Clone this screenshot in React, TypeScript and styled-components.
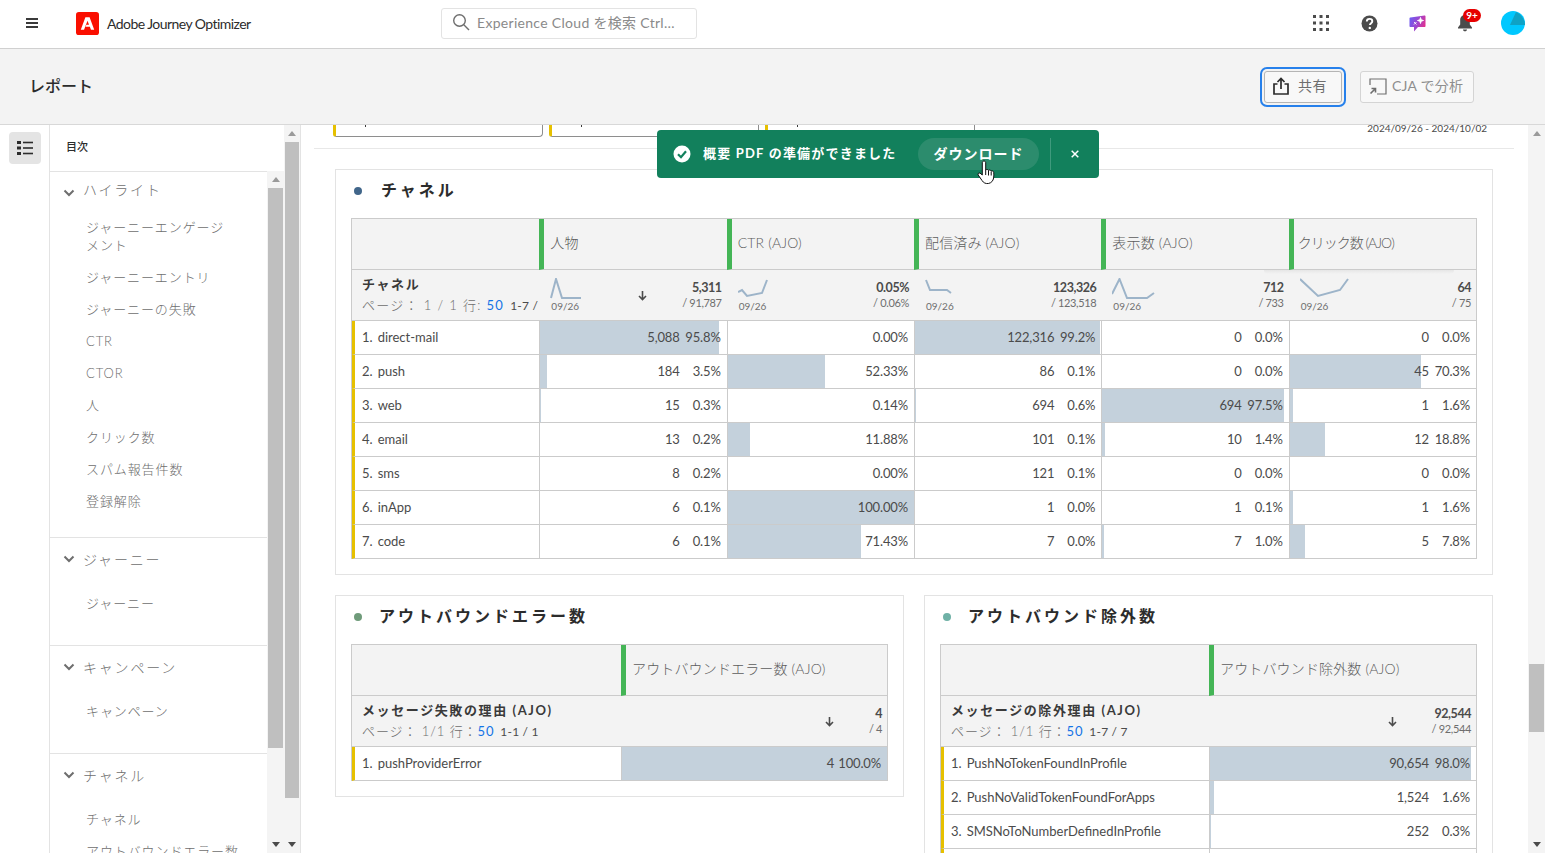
import React from 'react';
import styled, { createGlobalStyle } from 'styled-components';

const FONT = `Lato, "Noto Sans CJK JP", sans-serif`;

const GlobalStyle = createGlobalStyle`
  html, body {
    margin: 0;
    padding: 0;
    height: 100%;
    overflow: hidden;
    background: #fff;
  }
  * { box-sizing: border-box; }
`;

interface Row {
  label: string;
  cells: { value?: string; pct: string; bar: number }[];
}

interface Metric {
  spark?: string;
  sparkWidth?: number;
  total: string;
  sub: string;
  sorted?: boolean;
  shadow?: boolean;
}

const channelRows: Row[] = [
  { label: 'direct-mail', cells: [
    { value: '5,088', pct: '95.8%', bar: 95.8 }, { pct: '0.00%', bar: 0 }, { value: '122,316', pct: '99.2%', bar: 99.2 },
    { value: '0', pct: '0.0%', bar: 0 }, { value: '0', pct: '0.0%', bar: 0 } ] },
  { label: 'push', cells: [
    { value: '184', pct: '3.5%', bar: 3.5 }, { pct: '52.33%', bar: 52.33 }, { value: '86', pct: '0.1%', bar: 0.1 },
    { value: '0', pct: '0.0%', bar: 0 }, { value: '45', pct: '70.3%', bar: 70.3 } ] },
  { label: 'web', cells: [
    { value: '15', pct: '0.3%', bar: 0.3 }, { pct: '0.14%', bar: 0.14 }, { value: '694', pct: '0.6%', bar: 0.6 },
    { value: '694', pct: '97.5%', bar: 97.5 }, { value: '1', pct: '1.6%', bar: 1.6 } ] },
  { label: 'email', cells: [
    { value: '13', pct: '0.2%', bar: 0.2 }, { pct: '11.88%', bar: 11.88 }, { value: '101', pct: '0.1%', bar: 0.1 },
    { value: '10', pct: '1.4%', bar: 1.4 }, { value: '12', pct: '18.8%', bar: 18.8 } ] },
  { label: 'sms', cells: [
    { value: '8', pct: '0.2%', bar: 0.2 }, { pct: '0.00%', bar: 0 }, { value: '121', pct: '0.1%', bar: 0.1 },
    { value: '0', pct: '0.0%', bar: 0 }, { value: '0', pct: '0.0%', bar: 0 } ] },
  { label: 'inApp', cells: [
    { value: '6', pct: '0.1%', bar: 0.1 }, { pct: '100.00%', bar: 100 }, { value: '1', pct: '0.0%', bar: 0 },
    { value: '1', pct: '0.1%', bar: 0.1 }, { value: '1', pct: '1.6%', bar: 1.6 } ] },
  { label: 'code', cells: [
    { value: '6', pct: '0.1%', bar: 0.1 }, { pct: '71.43%', bar: 71.43 }, { value: '7', pct: '0.0%', bar: 0 },
    { value: '7', pct: '1.0%', bar: 1 }, { value: '5', pct: '7.8%', bar: 7.8 } ] },
];

const channelMetrics: Metric[] = [
  { spark: '1,20 6,1 12,20 31,20', sparkWidth: 32, total: '5,311', sub: '/ 91,787', sorted: true },
  { spark: '0,14 4,12 9,18 24,15 29,2', sparkWidth: 32, total: '0.05%', sub: '/ 0.06%' },
  { spark: '1,2 5,12 22,12 26,15', sparkWidth: 32, total: '123,326', sub: '/ 123,518' },
  { spark: '0,16 7.5,1 15,20 35,20 42,15', sparkWidth: 44, total: '712', sub: '/ 733' },
  { spark: '0,1 18,18 40,12 48,1', sparkWidth: 50, total: '64', sub: '/ 75', shadow: true },
];

const channelHeads = ['人物', 'CTR (AJO)', '配信済み (AJO)', '表示数 (AJO)', 'クリック数 (AJO)'];

const tocGroups = [
  { title: 'ハイライト', items: ['ジャーニーエンゲージメント', 'ジャーニーエントリ', 'ジャーニーの失敗', 'CTR', 'CTOR', '人', 'クリック数', 'スパム報告件数', '登録解除'] },
  { title: 'ジャーニー', items: ['ジャーニー'] },
  { title: 'キャンペーン', items: ['キャンペーン'] },
  { title: 'チャネル', items: ['チャネル', 'アウトバウンドエラー数'] },
];

const Page = styled.div`
  height: 100vh;
  display: flex;
  flex-direction: column;
  font-family: ${FONT};
  color: #4b4b4b;
  overflow: hidden;
`;

const TopBar = styled.header`
  flex: 0 0 49px;
  display: flex;
  align-items: center;
  padding: 0 8px 2px 26px;
  background: #fff;
  border-bottom: 1px solid #d0d0d0;
`;

const Brand = styled.div`
  width: 415px;
  display: flex;
  align-items: center;
`;

const Burger = styled.div`
  width: 12px;
  height: 10px;
  margin-right: 38px;
  border-top: 2px solid #3a3a3a;
  border-bottom: 2px solid #3a3a3a;
  display: flex;
  align-items: center;
  &::before {
    content: '';
    display: block;
    width: 100%;
    height: 2px;
    background: #3a3a3a;
  }
`;

const LogoMark = styled.svg`
  width: 23px;
  height: 23px;
  margin-right: 8px;
`;

const BrandName = styled.span`
  font-size: 14px;
  color: #2c2c2c;
  white-space: nowrap;
  letter-spacing: -0.55px;
`;

const SearchBox = styled.div`
  width: 256px;
  height: 31px;
  display: flex;
  align-items: center;
  gap: 7px;
  padding: 0 0 2px 10px;
  border: 1px solid #e3e3e3;
  border-radius: 3px;
  color: #8a8a8a;
  font-size: 14px;
  letter-spacing: 0.3px;
  white-space: nowrap;
`;

const TopIcons = styled.div`
  margin-left: auto;
  display: flex;
  align-items: center;
`;

const TopIcon = styled.div`
  position: relative;
  width: 48px;
  height: 32px;
  display: flex;
  align-items: center;
  justify-content: center;
`;

const Badge = styled.span`
  position: absolute;
  left: 22px;
  top: 2px;
  width: 18px;
  height: 13px;
  border-radius: 7px;
  background: #e60000;
  color: #fff;
  font-size: 10px;
  font-weight: 700;
  line-height: 13px;
  text-align: center;
`;

const Avatar = styled.svg`
  width: 24px;
  height: 24px;
`;

const SubHeader = styled.div`
  flex: 0 0 76px;
  display: flex;
  align-items: center;
  padding: 0 71px 0 29px;
  background: #f3f3f3;
  border-bottom: 1px solid #d8d8d8;
`;

const PageTitle = styled.h1`
  margin: 0 0 4px;
  font-size: 16px;
  font-weight: 500;
  color: #2c2c2c;
`;

const Actions = styled.div`
  margin-left: auto;
  display: flex;
  align-items: center;
  gap: 18px;
`;

const ActionButton = styled.button<{ $focus?: boolean }>`
  height: 32px;
  display: flex;
  align-items: center;
  gap: ${(p) => (p.$focus ? '9px' : '5px')};
  padding: 0 0 4px 8px;
  font-family: ${FONT};
  font-size: 14px;
  font-weight: 400;
  letter-spacing: ${(p) => (p.$focus ? '0.6px' : '0.2px')};
  border: 1px solid ${(p) => (p.$focus ? '#b5b5b5' : '#d4d4d4')};
  border-radius: 3px;
  background: #f8f8f8;
  color: ${(p) => (p.$focus ? '#6e6e6e' : '#8e8e8e')};
  box-shadow: ${(p) => (p.$focus ? '0 0 0 2px #f3f3f3, 0 0 0 4px #2680eb' : 'none')};
  width: ${(p) => (p.$focus ? '78px' : '114px')};
  white-space: nowrap;
  svg { flex-shrink: 0; margin-top: 3px; }
`;

const Body = styled.div`
  flex: 1;
  min-height: 0;
  display: flex;
`;

const Rail = styled.nav`
  flex: 0 0 50px;
  padding: 7px 0 0 9px;
  border-right: 1px solid #e3e3e3;
`;

const RailButton = styled.div`
  width: 32px;
  height: 32px;
  display: flex;
  align-items: center;
  justify-content: center;
  background: #e4e4e4;
  border-radius: 4px;
`;

const TocPanel = styled.aside`
  flex: 0 0 250px;
  display: flex;
  min-height: 0;
`;

const TocColumn = styled.div`
  flex: 0 0 234px;
  display: flex;
  flex-direction: column;
  min-height: 0;
`;

const TocHeading = styled.div`
  flex: 0 0 46px;
  padding: 0 0 4px 16px;
  display: flex;
  align-items: center;
  font-size: 11px;
  font-weight: 500;
  color: #2c2c2c;
`;

const TocBody = styled.div`
  flex: 1;
  min-height: 0;
  display: flex;
`;

const TocList = styled.div`
  flex: 0 0 217px;
  overflow: hidden;
  border-top: 1px solid #e3e3e3;
`;

const TocGroup = styled.section<{ $pad: number }>`
  padding-bottom: ${(p) => p.$pad}px;
  border-bottom: 1px solid #e3e3e3;
`;

const TocHead = styled.div<{ $first?: boolean }>`
  height: ${(p) => (p.$first ? '39px' : '49px')};
  line-height: ${(p) => (p.$first ? '36px' : '44px')};
  display: flex;
  padding-left: 13px;
  gap: 8px;
  font-size: 14px;
  font-weight: 300;
  letter-spacing: 1.8px;
  color: #6e6e6e;
`;

const Chevron = styled.svg`
  width: 12px;
  height: 8px;
  align-self: flex-start;
  margin-top: 17px;
`;

const TocItem = styled.div<{ $wrap?: boolean }>`
  width: 150px;
  margin-left: 36px;
  padding: 7px 0;
  font-size: 13px;
  font-weight: 300;
  line-height: 18px;
  letter-spacing: 0.9px;
  color: #6e6e6e;
  white-space: ${(p) => (p.$wrap ? 'normal' : 'nowrap')};
`;

const Scrollbar = styled.div<{ $width: number; $thumbHeight: number; $thumbTop?: number }>`
  flex: 0 0 ${(p) => p.$width}px;
  display: flex;
  flex-direction: column;
  background: #f4f4f4;
  &::before {
    content: '';
    display: block;
    order: 1;
    height: ${(p) => p.$thumbHeight}px;
    margin: ${(p) => p.$thumbTop ?? 0}px 1px 0 1px;
    background: #bfbfbf;
  }
`;

const ArrowUp = styled.div`
  order: 0;
  flex: 0 0 17px;
  display: flex;
  align-items: center;
  justify-content: center;
  &::before {
    content: '';
    border-left: 4px solid transparent;
    border-right: 4px solid transparent;
    border-bottom: 5px solid #9a9a9a;
  }
`;

const ArrowDown = styled.div`
  order: 2;
  flex: 0 0 17px;
  margin-top: auto;
  display: flex;
  align-items: center;
  justify-content: center;
  &::before {
    content: '';
    border-left: 4px solid transparent;
    border-right: 4px solid transparent;
    border-top: 5px solid #4b4b4b;
  }
`;

const Main = styled.main`
  position: relative;
  flex: 1;
  min-width: 0;
  border-left: 1px solid #e3e3e3;
  overflow: hidden;
`;

const FilterStrip = styled.div`
  height: 24px;
  margin: 0 14px 0 13px;
  padding: 0 27px 0 19px;
  display: flex;
  justify-content: space-between;
  border-bottom: 1px solid #e8e8e8;
  overflow: hidden;
`;

const FilterCards = styled.div`
  display: flex;
  gap: 6px;
`;

const FilterCard = styled.div<{ $open?: boolean }>`
  position: relative;
  width: 210px;
  height: 12px;
  border: 1px solid #8e8e8e;
  border-top: none;
  border-left: 3px solid #e6c000;
  border-bottom-width: ${(p) => (p.$open ? '0' : '1px')};
  border-radius: 0 0 4px 3px;
  &::after {
    content: '';
    position: absolute;
    left: 29px;
    top: 0;
    width: 1px;
    height: 2px;
    background: #3a3a3a;
  }
`;

const DateRange = styled.div`
  margin-top: -3px;
  height: 12px;
  font-size: 10px;
  line-height: 12px;
  color: #4b4b4b;
  white-space: nowrap;
`;

const Content = styled.div`
  padding: 20px 35px 0 34px;
  display: flex;
  flex-direction: column;
  gap: 20px;
`;

const Card = styled.section`
  padding: 0 15px 15px;
  border: 1px solid #e3e3e3;
  background: #fff;
`;

const TwoCards = styled.div`
  display: grid;
  grid-template-columns: 569px 569px;
  gap: 20px;
  align-items: start;
`;

const CardTitle = styled.h2<{ $dot: string; $gap: number }>`
  margin: 0;
  height: 48px;
  padding: 0 0 11px 3px;
  display: flex;
  align-items: center;
  gap: ${(p) => p.$gap}px;
  font-size: 16px;
  font-weight: 700;
  letter-spacing: 3px;
  color: #2c2c2c;
  &::before {
    content: '';
    width: 8px;
    height: 8px;
    margin-top: 4px;
    border-radius: 50%;
    background: ${(p) => p.$dot};
  }
`;

const Table = styled.div<{ $cols: string }>`
  display: grid;
  grid-template-columns: ${(p) => p.$cols};
  border: 1px solid #cbcbcb;
  border-bottom: none;
`;

const HeadCell = styled.div<{ $metric?: boolean; $tight?: boolean }>`
  height: 51px;
  display: flex;
  align-items: center;
  padding: 0 0 4px ${(p) => (p.$tight ? '4px' : '6px')};
  background: #f3f3f3;
  border-bottom: 1px solid #cbcbcb;
  border-left: ${(p) => (p.$metric ? '5px solid #44b556' : 'none')};
  font-size: 14px;
  font-weight: 300;
  letter-spacing: ${(p) => (p.$tight ? '-1px' : '0.15px')};
  color: #5c5c5c;
  white-space: nowrap;
`;

const SumLabel = styled.div`
  height: 51px;
  padding: 5px 0 0 10px;
  background: #f3f3f3;
  border-bottom: 1px solid #cbcbcb;
  overflow: hidden;
  white-space: nowrap;
`;

const SumName = styled.div`
  font-size: 13px;
  font-weight: 700;
  line-height: 18px;
  letter-spacing: 1.6px;
  color: #3a3a3a;
`;

const SumPaging = styled.div<{ $wide?: boolean }>`
  margin-top: 3px;
  font-size: 13px;
  font-weight: 300;
  line-height: 18px;
  letter-spacing: ${(p) => (p.$wide ? '1.3px' : '0.9px')};
  color: #6e6e6e;
`;

const PageSize = styled.span`
  color: #1473e6;
  font-weight: 400;
`;

const PageRange = styled.span`
  color: #4b4b4b;
  font-weight: 400;
  letter-spacing: 0.2px;
  font-size: 12px;
  margin-left: 6px;
`;

const SumCell = styled.div<{ $shadow?: boolean }>`
  position: relative;
  height: 51px;
  display: flex;
  align-items: center;
  padding: 0 5px 0 11px;
  background: #f3f3f3;
  border-bottom: 1px solid #cbcbcb;
  &::after {
    content: '';
    display: ${(p) => (p.$shadow ? 'block' : 'none')};
    position: absolute;
    top: 0;
    left: -25px;
    right: 22px;
    height: 4px;
    background: linear-gradient(#e6e6e6, #f3f3f3);
    border-radius: 0 0 8px 8px;
  }
`;

const Spark = styled.div`
  align-self: flex-start;
  padding-top: 8px;
  display: flex;
  flex-direction: column;
`;

const SparkLine = styled.svg`
  height: 22px;
  display: block;
`;

const SparkDate = styled.span`
  margin-left: 1px;
  font-size: 10px;
  line-height: 12px;
  color: #6e6e6e;
`;

const SumRight = styled.div`
  margin-left: auto;
  display: flex;
  align-items: center;
  gap: 35px;
`;

const SortArrow = styled.svg`
  width: 9px;
  height: 11px;
`;

const SumValues = styled.div`
  text-align: right;
  line-height: 15px;
`;

const SumTotal = styled.div`
  font-size: 12.5px;
  font-weight: 700;
  letter-spacing: -0.45px;
  color: #4b4b4b;
`;

const SumSub = styled.div`
  font-size: 11px;
  font-weight: 400;
  letter-spacing: -0.35px;
  color: #6e6e6e;
`;

const RowLabel = styled.div`
  height: 34px;
  display: flex;
  align-items: center;
  gap: 5px;
  padding: 0 0 2px 7px;
  border-left: 3px solid #e6c000;
  border-bottom: 1px solid #cbcbcb;
  font-size: 13px;
  white-space: nowrap;
`;

const RowCell = styled.div<{ $bar: number }>`
  height: 34px;
  display: flex;
  align-items: center;
  justify-content: flex-end;
  padding: 0 6px 2px 0;
  border-left: 1px solid #cbcbcb;
  border-bottom: 1px solid #cbcbcb;
  font-size: 13px;
  letter-spacing: -0.15px;
  background: linear-gradient(to right, #c4d1dc ${(p) => p.$bar}%, #fff ${(p) => p.$bar}%);
`;

const Pct = styled.span<{ $fixed?: boolean }>`
  min-width: ${(p) => (p.$fixed ? '41px' : '0')};
  padding-left: ${(p) => (p.$fixed ? '4px' : '0')};
  text-align: right;
  white-space: nowrap;
`;

const Toast = styled.div`
  position: absolute;
  left: 356px;
  top: 5px;
  width: 442px;
  height: 48px;
  display: flex;
  align-items: center;
  padding: 0 0 0 16px;
  background: #12805c;
  border-radius: 4px;
  color: #fff;
`;

const ToastText = styled.span`
  margin: 0 0 3px 12px;
  font-size: 13px;
  font-weight: 700;
  letter-spacing: 1.2px;
  white-space: nowrap;
`;

const ToastAction = styled.button`
  width: 121px;
  height: 32px;
  margin-left: auto;
  padding: 0 0 2px;
  border: none;
  border-radius: 16px;
  background: #2c8c6d;
  color: #fff;
  font-family: ${FONT};
  font-size: 14px;
  font-weight: 700;
  letter-spacing: 1px;
`;

const ToastDivider = styled.span`
  width: 1px;
  height: 32px;
  margin: 0 20px 0 11px;
  background: #3f9a7d;
`;

const ToastClose = styled.svg`
  width: 8px;
  height: 8px;
  margin-right: 20px;
`;

const HandCursor = styled.svg`
  position: absolute;
  left: 320px;
  top: 30px;
  width: 20px;
  height: 25px;
`;

const Sparkline: React.FC<{ points: string; width: number }> = ({ points, width }) => (
  <SparkLine viewBox={`0 0 ${width} 22`} width={width}>
    <polyline points={points} fill="none" stroke="#9db4c9" strokeWidth="2" />
  </SparkLine>
);

const DownArrow = () => (
  <SortArrow viewBox="0 0 9 11">
    <path d="M4.5 1v8M1 6l3.5 3.5L8 6" fill="none" stroke="#4b4b4b" strokeWidth="1.6" />
  </SortArrow>
);

const MetricSum: React.FC<{ metric: Metric }> = ({ metric }) => (
  <SumCell $shadow={metric.shadow}>
    {metric.spark && (
      <Spark>
        <Sparkline points={metric.spark} width={metric.sparkWidth ?? 32} />
        <SparkDate>09/26</SparkDate>
      </Spark>
    )}
    <SumRight>
      {metric.sorted && <DownArrow />}
      <SumValues>
        <SumTotal>{metric.total}</SumTotal>
        <SumSub>{metric.sub}</SumSub>
      </SumValues>
    </SumRight>
  </SumCell>
);

const DataRow: React.FC<{ row: Row; index: number }> = ({ row, index }) => (
  <>
    <RowLabel>
      <span>{index + 1}.</span>
      <span>{row.label}</span>
    </RowLabel>
    {row.cells.map((cell, i) => (
      <RowCell key={i} $bar={cell.bar}>
        {cell.value && <span>{cell.value}</span>}
        <Pct $fixed={!!cell.value}>{cell.pct}</Pct>
      </RowCell>
    ))}
  </>
);

const SmallTable: React.FC<{
  cols: string;
  head: string;
  name: string;
  paging: string;
  range: string;
  metric: Metric;
  rows: Row[];
  extra?: boolean;
}> = ({ cols, head, name, paging, range, metric, rows, extra }) => (
  <Table $cols={cols}>
    <HeadCell />
    <HeadCell $metric>{head}</HeadCell>
    <SumLabel>
      <SumName>{name}</SumName>
      <SumPaging>
        {paging}
        <PageSize>50</PageSize>
        <PageRange>{range}</PageRange>
      </SumPaging>
    </SumLabel>
    <MetricSum metric={metric} />
    {rows.map((r, i) => (
      <DataRow key={r.label} row={r} index={i} />
    ))}
    {extra && (
      <>
        <RowLabel />
        <RowCell $bar={0} />
      </>
    )}
  </Table>
);

export default function App() {
  return (
    <Page>
      <GlobalStyle />
      <TopBar>
        <Brand>
          <Burger />
          <LogoMark viewBox="0 0 24 24">
            <rect width="24" height="24" rx="3" fill="#fa0f00" />
            <path d="M9.8 5.5L5 18.5H8.4L12 9l1.6 4.200H10.900L10 15.500h4.500L15.600 18.500H19L14.200 5.500z" fill="#fff" />
          </LogoMark>
          <BrandName>Adobe Journey Optimizer</BrandName>
        </Brand>
        <SearchBox>
          <svg width="18" height="18" viewBox="0 0 18 18">
            <circle cx="7.5" cy="7.5" r="5.8" fill="none" stroke="#6e6e6e" strokeWidth="1.4" />
            <path d="M11.8 11.8L17 17" stroke="#6e6e6e" strokeWidth="1.4" />
          </svg>
          <span>Experience Cloud を検索 Ctrl…</span>
        </SearchBox>
        <TopIcons>
          <TopIcon>
            <svg width="16" height="16" viewBox="0 0 16 16" fill="#4b4b4b">
              {[0, 6.5, 13].flatMap((y) =>
                [0, 6.5, 13].map((x) => <rect key={`${x}-${y}`} x={x} y={y} width="3" height="3" />),
              )}
            </svg>
          </TopIcon>
          <TopIcon>
            <svg width="17" height="17" viewBox="0 0 17 17">
              <circle cx="8.5" cy="8.5" r="8" fill="#4b4b4b" />
              <path d="M5.8 6.4c0-1.6 1.2-2.5 2.8-2.5s2.7.9 2.7 2.3c0 2-2.4 2-2.4 3.9" fill="none" stroke="#fff" strokeWidth="1.9" />
              <circle cx="8.8" cy="12.9" r="1.2" fill="#fff" />
            </svg>
          </TopIcon>
          <TopIcon>
            <svg width="17" height="18" viewBox="0 0 17 18">
              <defs>
                <linearGradient id="chat" x1="0" y1="0.3" x2="1" y2="0.7">
                  <stop offset="0" stopColor="#6f5bf0" />
                  <stop offset="0.55" stopColor="#a544c8" />
                  <stop offset="1" stopColor="#ea2f86" />
                </linearGradient>
              </defs>
              <path d="M1.500 3.500L15.500 1.500c.6 0 1 .4 1 1V12c0 .6-.4 1-1 1H9l-4 4.500V13H1.500c-.6 0-1-.4-1-1V4.500c0-.6.4-1 1-1z" fill="url(#chat)" />
              <path d="M11.500 3.500l.7 2.300 2.300.7-2.300.7-.7 2.300-.7-2.300-2.300-.7 2.300-.7zM5 8l2.500 2.500M7.500 8L5 10.500" fill="#fff" stroke="#fff" strokeWidth="0.9" />
            </svg>
          </TopIcon>
          <TopIcon>
            <svg width="16" height="18" viewBox="0 0 16 18" fill="#4b4b4b">
              <path d="M8 1c3 0 4.800 2.200 4.800 5v4.500L15 13.500v1H1v-1l2.200-3V6C3.200 3.200 5 1 8 1z" />
              <path d="M6 15.500h4c0 1-.8 1.800-2 1.800s-2-.8-2-1.800z" />
            </svg>
            <Badge>9+</Badge>
          </TopIcon>
          <TopIcon>
            <Avatar viewBox="0 0 24 24">
              <circle cx="12" cy="12" r="12" fill="#00c8ff" />
              <path d="M15 1L9 14h15c0-5-3.500-11-9-13z" fill="#0fa2c5" />
            </Avatar>
          </TopIcon>
        </TopIcons>
      </TopBar>

      <SubHeader>
        <PageTitle>レポート</PageTitle>
        <Actions>
          <ActionButton $focus>
            <svg width="16" height="18" viewBox="0 0 16 18" fill="none" stroke="#2c2c2c" strokeWidth="1.7">
              <path d="M4.500 7H1v10h14V7h-3.500" />
              <path d="M8 12V1.500M4.500 5L8 1.500 11.500 5" />
            </svg>
            <span>共有</span>
          </ActionButton>
          <ActionButton>
            <svg width="18" height="17" viewBox="0 0 18 17" fill="none" stroke="#6e6e6e" strokeWidth="1.2">
              <path d="M1 7V1h16v15H8" />
              <path d="M1.500 15.500l5-5M2.500 10.500h4v4" strokeWidth="1.6" />
            </svg>
            <span>CJA で分析</span>
          </ActionButton>
        </Actions>
      </SubHeader>

      <Body>
        <Rail>
          <RailButton>
            <svg width="16" height="14" viewBox="0 0 16 14" fill="#2c2c2c">
              <rect x="0" y="0" width="4" height="3" />
              <rect x="0" y="5.5" width="4" height="3" />
              <rect x="0" y="11" width="4" height="3" />
              <rect x="6" y="0.7" width="10" height="1.6" />
              <rect x="6" y="6.2" width="10" height="1.6" />
              <rect x="6" y="11.7" width="10" height="1.6" />
            </svg>
          </RailButton>
        </Rail>

        <TocPanel>
          <TocColumn>
            <TocHeading>目次</TocHeading>
            <TocBody>
              <TocList>
                {tocGroups.map((group, g) => (
                  <TocGroup key={group.title} $pad={g === 0 ? 20 : 26}>
                    <TocHead $first={g === 0}>
                      <Chevron viewBox="0 0 12 8">
                        <path d="M1.500 1.500L6 6l4.500-4.500" fill="none" stroke="#6e6e6e" strokeWidth="2" />
                      </Chevron>
                      <span>{group.title}</span>
                    </TocHead>
                    {group.items.map((item) => (
                      <TocItem key={item} $wrap={item.length > 11}>{item}</TocItem>
                    ))}
                  </TocGroup>
                ))}
              </TocList>
              <Scrollbar $width={17} $thumbHeight={560}>
                <ArrowUp />
                <ArrowDown />
              </Scrollbar>
            </TocBody>
          </TocColumn>
          <Scrollbar $width={16} $thumbHeight={656}>
            <ArrowUp />
            <ArrowDown />
          </Scrollbar>
        </TocPanel>

        <Main>
          <FilterStrip>
            <FilterCards>
              <FilterCard />
              <FilterCard />
              <FilterCard $open />
            </FilterCards>
            <DateRange>2024/09/26 - 2024/10/02</DateRange>
          </FilterStrip>

          <Content>
            <Card>
              <CardTitle $dot="#41668a" $gap={19}>チャネル</CardTitle>
              <Table $cols="repeat(6, 1fr)">
                <HeadCell />
                {channelHeads.map((h) => (
                  <HeadCell key={h} $metric $tight={h.startsWith('クリック')}>{h}</HeadCell>
                ))}
                <SumLabel>
                  <SumName>チャネル</SumName>
                  <SumPaging $wide>
                    ページ： 1 / 1 行: <PageSize>50</PageSize>
                    <PageRange>1-7 /</PageRange>
                  </SumPaging>
                </SumLabel>
                {channelMetrics.map((m) => (
                  <MetricSum key={m.total} metric={m} />
                ))}
                {channelRows.map((r, i) => (
                  <DataRow key={r.label} row={r} index={i} />
                ))}
              </Table>
            </Card>

            <TwoCards>
              <Card>
                <CardTitle $dot="#6f9b7a" $gap={17}>アウトバウンドエラー数</CardTitle>
                <SmallTable
                  cols="269px 1fr"
                  head="アウトバウンドエラー数 (AJO)"
                  name="メッセージ失敗の理由 (AJO)"
                  paging="ページ： 1/1 行："
                  range="1-1 / 1"
                  metric={{ total: '4', sub: '/ 4', sorted: true }}
                  rows={[{ label: 'pushProviderError', cells: [{ value: '4', pct: '100.0%', bar: 100 }] }]}
                />
              </Card>
              <Card>
                <CardTitle $dot="#6fb1a6" $gap={17}>アウトバウンド除外数</CardTitle>
                <SmallTable
                  cols="268px 1fr"
                  head="アウトバウンド除外数 (AJO)"
                  name="メッセージの除外理由 (AJO)"
                  paging="ページ： 1/1 行："
                  range="1-7 / 7"
                  metric={{ total: '92,544', sub: '/ 92,544', sorted: true }}
                  rows={[
                    { label: 'PushNoTokenFoundInProfile', cells: [{ value: '90,654', pct: '98.0%', bar: 98 }] },
                    { label: 'PushNoValidTokenFoundForApps', cells: [{ value: '1,524', pct: '1.6%', bar: 1.6 }] },
                    { label: 'SMSNoToNumberDefinedInProfile', cells: [{ value: '252', pct: '0.3%', bar: 0.3 }] },
                  ]}
                  extra
                />
              </Card>
            </TwoCards>
          </Content>

          <Toast>
            <svg width="18" height="18" viewBox="0 0 18 18">
              <circle cx="9" cy="9" r="8.5" fill="#fff" />
              <path d="M5 9.2l3 3 5-6" fill="none" stroke="#12805c" strokeWidth="2.2" />
            </svg>
            <ToastText>概要 PDF の準備ができました</ToastText>
            <ToastAction>ダウンロード</ToastAction>
            <ToastDivider />
            <ToastClose viewBox="0 0 8 8">
              <path d="M.7.7l6.6 6.6M7.3.7L.7 7.3" stroke="#fff" strokeWidth="1.5" />
            </ToastClose>
            <HandCursor viewBox="0 0 20 25">
              <path
                d="M7 1c1 0 1.700.8 1.700 1.800V10c.7-.8 2.300-.7 2.800.4.700-.7 2.300-.5 2.700.7.800-.5 2.300-.1 2.500 1.200.2 1.500.3 3.700-.1 5.700-.5 2.900-2.300 5-5.200 5.500-2.700.4-5-.7-6.300-2.900L1.200 15c-.7-1.100.5-2.500 1.800-1.900l2.300 1.900V2.800C5.300 1.800 6 1 7 1z"
                fill="#fff"
                stroke="#111"
                strokeWidth="1"
              />
              <path d="M8.700 10v5M11.500 10.500v5M14.200 11.500v4" stroke="#111" strokeWidth="1" fill="none" />
            </HandCursor>
          </Toast>
        </Main>

        <Scrollbar $width={17} $thumbHeight={68} $thumbTop={522}>
          <ArrowUp />
          <ArrowDown />
        </Scrollbar>
      </Body>
    </Page>
  );
}
